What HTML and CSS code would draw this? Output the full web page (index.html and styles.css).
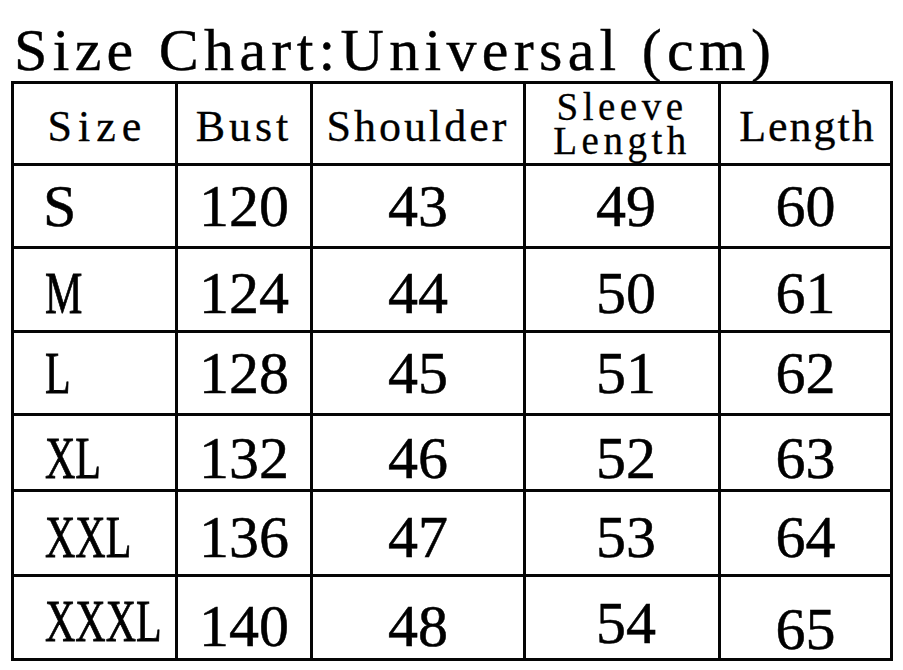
FILE: index.html
```html
<!DOCTYPE html>
<html lang="en">
<head>
<meta charset="utf-8">
<title>Size Chart</title>
<link rel="stylesheet" href="styles.css">
</head>
<body>
<div class="page">
  <h1 class="title">Size Chart:Universal (cm)</h1>
  <div class="chart" role="table">
    <div class="cell head size-col" role="columnheader"><span class="hsize">Size</span></div>
    <div class="cell head" role="columnheader">Bust</div>
    <div class="cell head" role="columnheader"><span class="tight">Shoulder</span></div>
    <div class="cell head two" role="columnheader"><span class="line">Sleeve</span><span class="line">Length</span></div>
    <div class="cell head" role="columnheader"><span class="tight2">Length</span></div>

    <div class="cell size-col"><span class="sz plain">S</span></div>
    <div class="cell num">120</div>
    <div class="cell num">43</div>
    <div class="cell num shift-r">49</div>
    <div class="cell num">60</div>

    <div class="cell size-col low3"><span class="sz">M</span></div>
    <div class="cell num low3">124</div>
    <div class="cell num low3">44</div>
    <div class="cell num low3 shift-r">50</div>
    <div class="cell num low3">61</div>

    <div class="cell size-col"><span class="sz">L</span></div>
    <div class="cell num">128</div>
    <div class="cell num">45</div>
    <div class="cell num shift-r">51</div>
    <div class="cell num">62</div>

    <div class="cell size-col low5"><span class="sz">XL</span></div>
    <div class="cell num low5">132</div>
    <div class="cell num low5">46</div>
    <div class="cell num low5 shift-r">52</div>
    <div class="cell num low5">63</div>

    <div class="cell size-col low4"><span class="sz">XXL</span></div>
    <div class="cell num low4">136</div>
    <div class="cell num low4">47</div>
    <div class="cell num low4 shift-r">53</div>
    <div class="cell num low4">64</div>

    <div class="cell size-col low3"><span class="sz">XXXL</span></div>
    <div class="cell num low8">140</div>
    <div class="cell num low8">48</div>
    <div class="cell num low5 shift-r">54</div>
    <div class="cell num low11">65</div>
  </div>
</div>
</body>
</html>
```

FILE: styles.css
```css
html, body {
  margin: 0;
  padding: 0;
  background: #ffffff;
}

body {
  width: 903px;
  height: 670px;
  overflow: hidden;
  color: #000;
  font-family: "Liberation Serif", "Times New Roman", serif;
}

.page {
  display: flex;
  flex-direction: column;
}

.title {
  margin: 0;
  padding: 20px 0 0 14px;
  font-size: 60px;
  font-weight: normal;
  line-height: 60px;
  letter-spacing: 5.3px;
  white-space: nowrap;
  -webkit-text-stroke: 0.4px #000;
}

.chart {
  display: grid;
  grid-template-columns: 161px 132px 210px 192px 169px;
  grid-template-rows: 79px 80px 81px 80px 73px 82px 81px;
  gap: 3px;
  padding: 3px;
  margin: 1px 0 0 11px;
  width: max-content;
  background: #050505;
}

.cell {
  background: #fff;
  display: flex;
  align-items: center;
  justify-content: center;
  font-size: 60px;
  line-height: 60px;
  white-space: nowrap;
  -webkit-text-stroke: 0.5px #000;
}

.head {
  font-size: 44px;
  line-height: 44px;
  letter-spacing: 4px;
  padding-top: 7px;
  box-sizing: border-box;
  -webkit-text-stroke: 0.3px #000;
}

.head .hsize {
  letter-spacing: 6px;
  padding-left: 6px;
}

.head .tight {
  letter-spacing: 3px;
}

.head .tight2 {
  letter-spacing: 2px;
  padding-left: 4px;
}

.head.size-col {
  justify-content: center;
  padding-left: 0;
}

.head.two {
  font-size: 39px;
  letter-spacing: 4.5px;
  text-align: center;
  padding-top: 0;
  flex-direction: column;
}

.head.two .line {
  display: block;
  line-height: 34px;
  height: 34px;
  overflow: visible;
}

.size-col {
  justify-content: flex-start;
  padding-left: 31px;
  box-sizing: border-box;
}

.sz {
  display: inline-block;
  transform: scaleX(0.7);
  transform-origin: left center;
  -webkit-text-stroke: 0.8px #000;
}

.sz.plain {
  transform: none;
  margin-left: -2px;
  -webkit-text-stroke: 0.5px #000;
}

.num {
  box-sizing: border-box;
}

.shift-r {
  padding-left: 8px;
}

.low3 { padding-top: 6px; }
.low4 { padding-top: 8px; }
.low5 { padding-top: 10px; }
.low8 { padding-top: 16px; }
.low11 { padding-top: 22px; }
```
